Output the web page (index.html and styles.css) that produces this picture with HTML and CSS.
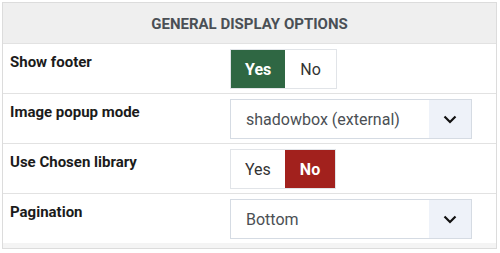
FILE: index.html
```html
<!DOCTYPE html>
<html>
<head>
<meta charset="utf-8">
<link rel="stylesheet" href="styles.css">
</head>
<body>
<div class="panel">
  <div class="panel-head">General Display Options</div>
  <div class="row">
    <div class="label">Show footer</div>
    <div class="control">
      <div class="switch">
        <span class="opt on-yes">Yes</span><span class="opt">No</span>
      </div>
    </div>
  </div>
  <div class="row">
    <div class="label">Image popup mode</div>
    <div class="control">
      <div class="select">
        <span class="select-text">shadowbox (external)</span>
        <span class="select-arrow"><svg width="14" height="9" viewBox="0 0 14 9"><path d="M1.5 1.5 L7 7 L12.5 1.5" fill="none" stroke="#111" stroke-width="2.2"/></svg></span>
      </div>
    </div>
  </div>
  <div class="row">
    <div class="label">Use Chosen library</div>
    <div class="control">
      <div class="switch">
        <span class="opt">Yes</span><span class="opt on-no">No</span>
      </div>
    </div>
  </div>
  <div class="row">
    <div class="label">Pagination</div>
    <div class="control">
      <div class="select">
        <span class="select-text">Bottom</span>
        <span class="select-arrow"><svg width="14" height="9" viewBox="0 0 14 9"><path d="M1.5 1.5 L7 7 L12.5 1.5" fill="none" stroke="#111" stroke-width="2.2"/></svg></span>
      </div>
    </div>
  </div>
</div>
</body>
</html>
```
FILE: styles.css
```css
* { box-sizing: border-box; }
body {
  margin: 0;
  font-family: Roboto, "Liberation Sans", sans-serif;
  background: #fff;
}
.panel {
  margin: 2px 3px 2px 2px;
  border: 1px solid #dcdcdc;
  background: #f4f4f4;
  padding-bottom: 5px;
}
.panel-head {
  height: 40px;
  display: flex;
  align-items: center;
  justify-content: center;
  padding-top: 1px;
  background: #efefef;
  color: #4a4f55;
  font-weight: 700;
  font-size: 15px;
  text-transform: uppercase;
}
.row {
  display: flex;
  background: #fff;
  border-top: 1px solid #e2e2e2;
  padding: 5px 0 5px 0;
  height: 50px;
}
.row:first-of-type { border-top: none; }
.label {
  width: 227px;
  padding: 4px 0 0 7px;
  font-weight: 700;
  font-size: 15px;
  color: #1b1b1b;
}
.control { flex: 1; display: flex; }
.switch {
  display: flex;
  height: 40px;
  border: 1px solid #e1e4e8;
}
.opt {
  display: flex;
  align-items: center;
  padding: 0 14px;
  font-size: 16px;
  color: #333;
}
.opt + .opt { padding: 0 15px; }
.on-yes { background: #2f6743; color: #fff; font-weight: 700; }
.on-no { background: #a2211d; color: #fff; font-weight: 700; }
.select {
  width: 242px;
  height: 40px;
  display: flex;
  border: 1px solid #d5dbe3;
  background: #fff;
}
.select-text {
  flex: 1;
  display: flex;
  align-items: center;
  padding-left: 15px;
  font-size: 16px;
  color: #4b4f54;
}
.select-arrow {
  width: 42px;
  display: flex;
  align-items: center;
  justify-content: center;
  background: #eef2f9;
}
```
